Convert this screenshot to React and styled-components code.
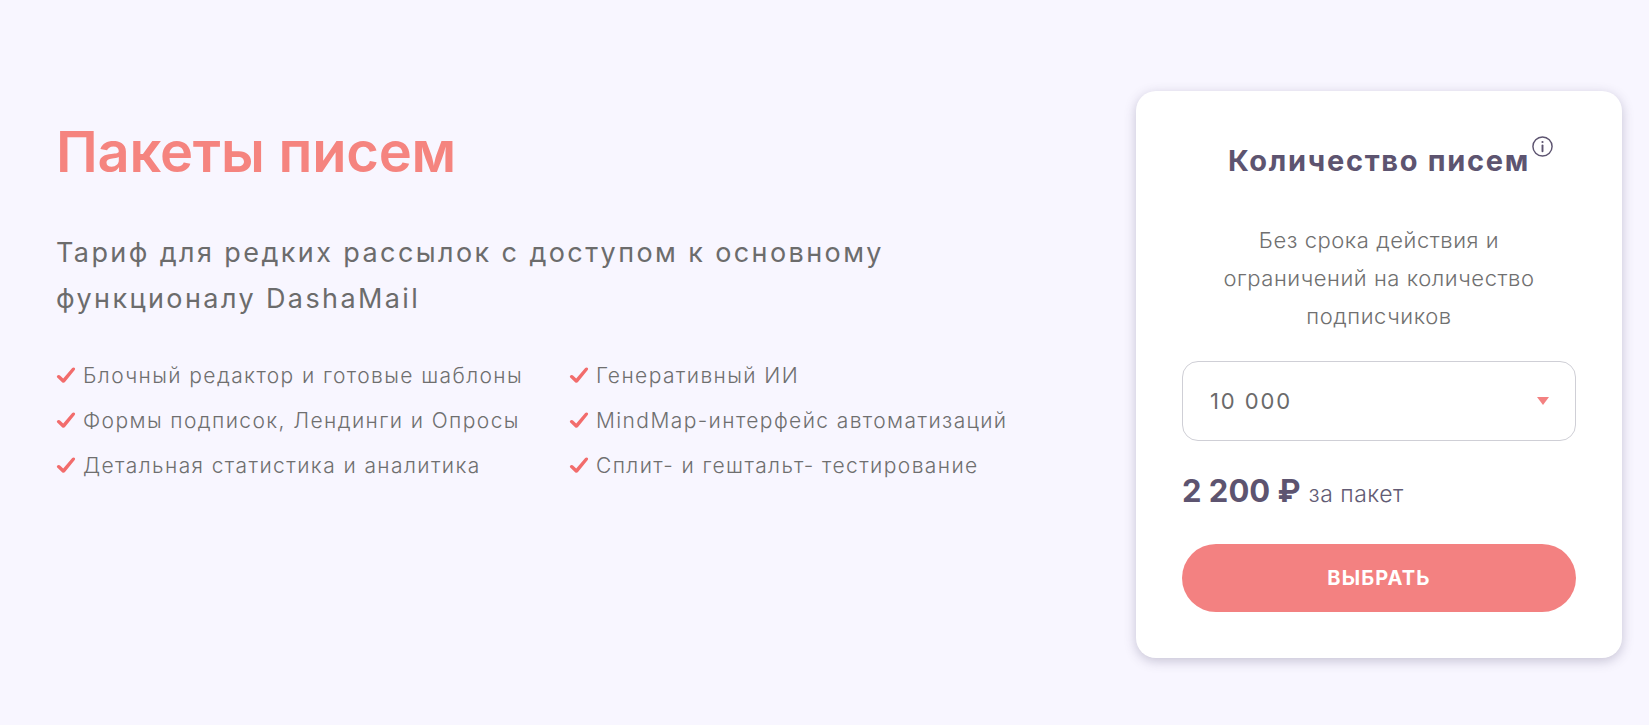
import React from "react";
import styled, { createGlobalStyle } from "styled-components";

const GlobalStyle = createGlobalStyle`
  html, body { margin: 0; padding: 0; }
  body {
    background: #f8f6ff;
    font-family: Inter, "Noto Sans", "DejaVu Sans", sans-serif;
    color: #6f6f6f;
  }
  * { box-sizing: border-box; }
`;

const Page = styled.main`
  display: flex;
  justify-content: space-between;
  align-items: flex-start;
  padding: 91px 27px 64px 56px;
  min-height: 725px;
`;

const Intro = styled.section`
  display: flex;
  flex-direction: column;
  padding-top: 28px;
`;

const Title = styled.h1`
  margin: 0;
  font-size: 56px;
  line-height: 67px;
  font-weight: 600;
  color: #f5847f;
  letter-spacing: -0.2px;
`;

const Lead = styled.p`
  margin: 44px 0 0;
  max-width: 870px;
  font-size: 27px;
  line-height: 46px;
  font-weight: 400;
  letter-spacing: 2.4px;
  color: #6c6c6c;
`;

const Features = styled.ul`
  list-style: none;
  margin: 39px 0 0;
  padding: 0;
  display: grid;
  grid-template-columns: 513px auto;
  grid-auto-flow: column;
  grid-template-rows: repeat(3, auto);
  row-gap: 15px;
`;

const Feature = styled.li`
  display: flex;
  align-items: center;
  gap: 7px;
  font-size: 21px;
  line-height: 30px;
  font-weight: 300;
  letter-spacing: 1.4px;
  color: #6f6f6f;
`;

const CheckIcon = styled.svg`
  width: 20px;
  height: 16px;
  flex: none;
  margin-top: -2px;
`;

const Card = styled.aside`
  width: 486px;
  background: #ffffff;
  border-radius: 20px;
  box-shadow: 0 3px 12px rgba(70, 60, 100, 0.28);
  padding: 53px 46px 46px;
  display: flex;
  flex-direction: column;
  align-items: stretch;
`;

const CardTitle = styled.h2`
  margin: 0;
  text-align: center;
  font-size: 29px;
  line-height: 34px;
  font-weight: 700;
  letter-spacing: 1.7px;
  color: #5d5470;
`;

const InfoMark = styled.span`
  position: relative;
  display: inline-block;
  width: 0;
  height: 0;
  svg {
    position: absolute;
    left: 1px;
    top: -36px;
  }
`;

const Description = styled.p`
  margin: 43px 0 0;
  text-align: center;
  font-size: 22px;
  line-height: 38px;
  font-weight: 300;
  letter-spacing: 0.55px;
  color: #707070;
  padding: 0 20px;
`;

const SelectBox = styled.div`
  margin-top: 26px;
  height: 80px;
  border: 1px solid #cfcfd6;
  border-radius: 16px;
  display: flex;
  align-items: center;
  justify-content: space-between;
  padding: 0 26px 0 27px;
  font-size: 22px;
  font-weight: 400;
  letter-spacing: 1.9px;
  color: #6a6a6a;
  cursor: pointer;
`;

const Caret = styled.span`
  width: 0;
  height: 0;
  border-left: 6px solid transparent;
  border-right: 6px solid transparent;
  border-top: 8px solid #f38181;
`;

const Price = styled.div`
  margin-top: 30px;
  display: flex;
  align-items: baseline;
  gap: 8px;
  line-height: 40px;
`;

const Amount = styled.span`
  font-size: 31px;
  font-weight: 700;
  color: #5d5470;
`;

const Unit = styled.span`
  font-size: 23px;
  font-weight: 300;
  letter-spacing: 0.5px;
  color: #625b74;
`;

const ChooseButton = styled.button`
  margin-top: 30px;
  height: 68px;
  border: none;
  border-radius: 34px;
  background: #f38181;
  color: #ffffff;
  font-family: inherit;
  font-size: 20px;
  font-weight: 700;
  letter-spacing: 1.1px;
  cursor: pointer;
`;

const Check = () => (
  <CheckIcon viewBox="0 0 20 16" aria-hidden="true">
    <path
      fill="#f26c6c"
      d="M1 9 C1.8 7.9 3.3 7.8 4.3 8.8 L7.2 11.6 L16.2 1 C17 0.1 18.5 0.2 19 1.3 C19.2 1.9 19.1 2.5 18.7 3 L9 15 C8.3 15.9 6.9 16 6.1 15.2 L1.2 10.6 C0.8 10.2 0.7 9.5 1 9 Z"
    />
  </CheckIcon>
);

const InfoIcon = () => (
  <svg width="23" height="23" viewBox="0 0 24 24" fill="none" stroke="#5d5470" strokeWidth="1.5" strokeLinecap="round" aria-hidden="true">
    <circle cx="12" cy="12" r="10" />
    <path d="M12 11v6" strokeWidth="2" />
    <circle cx="12" cy="7.3" r="1.15" fill="#5d5470" stroke="none" />
  </svg>
);

const features = [
  "Блочный редактор и готовые шаблоны",
  "Формы подписок, Лендинги и Опросы",
  "Детальная статистика и аналитика",
  "Генеративный ИИ",
  "MindMap-интерфейс автоматизаций",
  "Сплит- и гештальт- тестирование",
];

export default function App() {
  return (
    <>
      <GlobalStyle />
      <Page>
        <Intro>
          <Title>Пакеты писем</Title>
          <Lead>Тариф для редких рассылок с доступом к основному функционалу DashaMail</Lead>
          <Features>
            {features.map((f) => (
              <Feature key={f}>
                <Check />
                {f}
              </Feature>
            ))}
          </Features>
        </Intro>
        <Card>
          <CardTitle>
            Количество писем
            <InfoMark>
              <InfoIcon />
            </InfoMark>
          </CardTitle>
          <Description>Без срока действия и ограничений на количество подписчиков</Description>
          <SelectBox role="button">
            <span>10 000</span>
            <Caret />
          </SelectBox>
          <Price>
            <Amount>2 200 ₽</Amount>
            <Unit>за пакет</Unit>
          </Price>
          <ChooseButton>ВЫБРАТЬ</ChooseButton>
        </Card>
      </Page>
    </>
  );
}
